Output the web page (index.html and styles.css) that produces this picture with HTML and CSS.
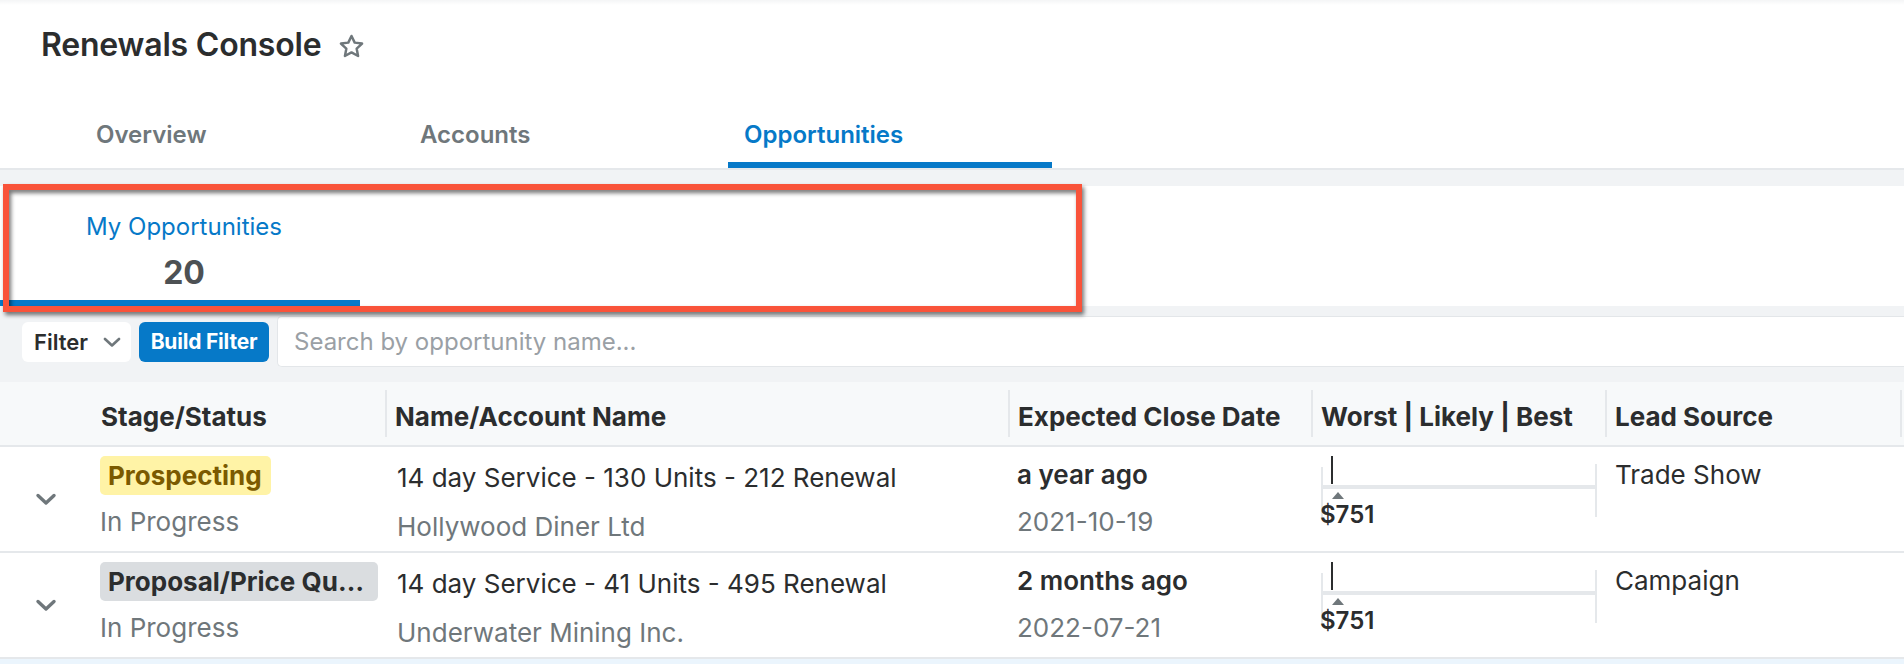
FILE: index.html
```html
<!DOCTYPE html>
<html lang="en">
<head>
<meta charset="utf-8">
<title>Renewals Console</title>
<link rel="stylesheet" href="styles.css">
</head>
<body>
<div class="page">
  <header class="app-header">
    <div class="title-row">
      <h1 class="title">Renewals Console</h1>
      <svg class="star" viewBox="0 0 24 24" width="27" height="27" aria-hidden="true">
        <path d="M12 2.6l2.85 5.95 6.55.85-4.8 4.55 1.25 6.5L12 17.3l-5.85 3.15 1.25-6.5-4.8-4.55 6.55-.85z" fill="none" stroke="#6f777b" stroke-width="2.2" stroke-linejoin="round"/>
      </svg>
    </div>
    <nav class="tabs">
      <div class="tab">Overview</div>
      <div class="tab">Accounts</div>
      <div class="tab active">Opportunities</div>
    </nav>
  </header>

  <div class="band"></div>

  <div class="dashlet-tabs">
    <div class="dtab active">
      <div class="dtab-label">My Opportunities</div>
      <div class="dtab-count">20</div>
    </div>
  </div>

  <div class="filterbar">
    <button class="btn-filter">Filter
      <svg viewBox="0 0 18 10" width="18" height="10" aria-hidden="true"><polyline points="2,2 9,8.5 16,2" fill="none" stroke="#6f777b" stroke-width="2.6" stroke-linecap="round" stroke-linejoin="round"/></svg>
    </button>
    <button class="btn-build">Build Filter</button>
    <input class="search" type="text" placeholder="Search by opportunity name...">
  </div>

  <div class="table">
    <div class="thead">
      <div class="th th-chev"></div>
      <div class="th th-first">Stage/Status</div>
      <div class="th">Name/Account Name</div>
      <div class="th">Expected Close Date</div>
      <div class="th">Worst | Likely | Best</div>
      <div class="th">Lead Source</div>
      <div class="th"></div>
    </div>

    <div class="row">
      <div class="td td-chev">
        <svg viewBox="0 0 22 15" width="22" height="15" aria-hidden="true"><polyline points="3,3.5 11,11 19,3.5" fill="none" stroke="#6f777b" stroke-width="3.4" stroke-linecap="round" stroke-linejoin="round"/></svg>
      </div>
      <div class="td td-stage">
        <span class="badge badge-yellow">Prospecting</span>
        <div class="status">In Progress</div>
      </div>
      <div class="td td-name">
        <div class="line">14 day Service - 130 Units - 212 Renewal</div>
        <div class="line muted">Hollywood Diner Ltd</div>
      </div>
      <div class="td td-date">
        <div class="line strong">a year ago</div>
        <div class="line muted">2021-10-19</div>
      </div>
      <div class="td td-chart">
        <div class="chart">
          <span class="c-left"></span>
          <span class="c-right"></span>
          <span class="c-bar"></span>
          <span class="c-tick"></span>
          <span class="c-tri"></span>
          <span class="c-label">$751</span>
        </div>
      </div>
      <div class="td td-lead"><div class="line">Trade Show</div></div>
      <div class="td"></div>
    </div>

    <div class="row">
      <div class="td td-chev">
        <svg viewBox="0 0 22 15" width="22" height="15" aria-hidden="true"><polyline points="3,3.5 11,11 19,3.5" fill="none" stroke="#6f777b" stroke-width="3.4" stroke-linecap="round" stroke-linejoin="round"/></svg>
      </div>
      <div class="td td-stage">
        <span class="badge badge-gray">Proposal/Price Quote</span>
        <div class="status">In Progress</div>
      </div>
      <div class="td td-name">
        <div class="line">14 day Service - 41 Units - 495 Renewal</div>
        <div class="line muted">Underwater Mining Inc.</div>
      </div>
      <div class="td td-date">
        <div class="line strong">2 months ago</div>
        <div class="line muted">2022-07-21</div>
      </div>
      <div class="td td-chart">
        <div class="chart">
          <span class="c-left"></span>
          <span class="c-right"></span>
          <span class="c-bar"></span>
          <span class="c-tick"></span>
          <span class="c-tri"></span>
          <span class="c-label">$751</span>
        </div>
      </div>
      <div class="td td-lead"><div class="line">Campaign</div></div>
      <div class="td"></div>
    </div>

    <div class="row-next"></div>
  </div>

  <div class="annotation"></div>
</div>
</body>
</html>
```

FILE: styles.css
```css
* { box-sizing: border-box; }

html, body {
  margin: 0;
  padding: 0;
  background: #ffffff;
}

body {
  font-family: Inter, "Noto Sans", "Liberation Sans", sans-serif;
  color: #2b2d2e;
  width: 1904px;
  height: 664px;
  overflow: hidden;
}

.page {
  position: relative;
  width: 1904px;
}

/* ---------- header ---------- */
.app-header {
  background: linear-gradient(#f4f5f6 0, #ffffff 5px);
}

.title-row {
  height: 90px;
  display: flex;
  align-items: center;
  padding-left: 41px;
  gap: 17px;
}

.title {
  margin: 0;
  font-size: 32px;
  font-weight: 600;
  line-height: 1;
  color: #2b2d2e;
  letter-spacing: -0.2px;
}

.star { display: block; margin-top: 2px; }

.tabs {
  display: flex;
  height: 80px;
  padding-left: 80px;
  border-bottom: 2px solid #e5e8eb;
}

.tab {
  width: 324px;
  height: 78px;
  padding: 10px 0 0 16px;
  display: flex;
  align-items: center;
  font-size: 24px;
  font-weight: 600;
  color: #6f777b;
}

.tab.active {
  color: #0679c8;
  box-shadow: inset 0 -6px 0 #0679c8;
}

/* ---------- bands ---------- */
.band {
  height: 16px;
  background: #f1f3f5;
}

.dashlet-tabs {
  height: 120px;
  background: #ffffff;
  display: flex;
}

.dtab {
  width: 360px;
  padding: 26px 0 0 8px;
  text-align: center;
}

.dtab.active { box-shadow: inset 0 -6px 0 #0679c8; }

.dtab-label {
  font-size: 24px;
  line-height: 30px;
  color: #0679c8;
}

.dtab-count {
  margin-top: 11px;
  font-size: 32px;
  line-height: 40px;
  font-weight: 700;
  color: #4d5154;
}

/* ---------- filter bar ---------- */
.filterbar {
  height: 76px;
  background: #f1f3f5;
  display: flex;
  align-items: center;
  padding: 10px 0 15px 22px;
  gap: 8px;
}

.btn-filter, .btn-build {
  height: 40px;
  border: 0;
  border-radius: 6px;
  font-family: inherit;
  font-size: 22px;
  display: flex;
  align-items: center;
  white-space: nowrap;
  cursor: pointer;
}

.btn-filter {
  width: 109px;
  background: #ffffff;
  color: #2b2d2e;
  font-weight: 600;
  padding: 0 10px 0 12px;
  justify-content: space-between;
}

.btn-build {
  width: 130px;
  background: #0679c8;
  color: #ffffff;
  font-weight: 700;
  font-size: 21px;
  letter-spacing: -0.2px;
  padding: 0 4px;
  justify-content: center;
}

.search {
  flex: 1;
  height: 51px;
  border: 1px solid #e3e6e9;
  border-right: 0;
  border-radius: 5px 0 0 5px;
  background: #ffffff;
  padding: 0 0 0 16px;
  font-family: inherit;
  font-size: 24px;
  color: #2b2d2e;
  outline: none;
}

.search::placeholder { color: #9aa0a5; }

/* ---------- table ---------- */
.thead, .row {
  display: grid;
  grid-template-columns: 90px 295px 623px 303px 294px 295px 1fr;
}

.thead {
  height: 65px;
  background: #f7f9fa;
  border-bottom: 2px solid #e5e8eb;
  align-items: start;
}

.th {
  margin-top: 8px;
  height: 47px;
  padding: 5px 0 0 8px;
  border-left: 2px solid #e5e8eb;
  display: flex;
  align-items: center;
  font-size: 26px;
  font-weight: 700;
  white-space: nowrap;
  color: #2b2d2e;
}

.th-chev { border-left: 0; }
.th-first { border-left: 0; padding-left: 11px; }

.row {
  height: 106px;
  border-bottom: 2px solid #e5e8eb;
  background: #ffffff;
}

.td {
  font-size: 26px;
  min-width: 0;
}

.td-chev {
  display: flex;
  align-items: center;
  justify-content: center;
  padding-left: 2px;
}

.td-chev svg { display: block; }

.td-stage {
  padding: 9px 4px 0 10px;
}

.badge {
  display: block;
  max-width: 100%;
  width: max-content;
  height: 39px;
  line-height: 39px;
  padding: 0 9px 0 8px;
  border-radius: 5px;
  font-weight: 700;
  white-space: nowrap;
  overflow: hidden;
  text-overflow: ellipsis;
}

.badge-yellow { background: #fff3a6; color: #7b5a00; }
.badge-gray { background: #dadde0; color: #2b2d2e; width: 278px; }

.status {
  margin-top: 3px;
  line-height: 48px;
  color: #6f777b;
}

.td-name { padding: 6px 10px 0 12px; }
.td-name .line { line-height: 49px; white-space: nowrap; }

.td-date { padding: 4px 10px 0 9px; }
.td-date .line { line-height: 47px; }

.td-lead { padding: 4px 10px 0 10px; }
.td-lead .line { line-height: 47px; }

.muted { color: #6f777b; }
.strong { font-weight: 600; }

.td-chart { padding: 9px 0 0 10px; }

.chart {
  position: relative;
  width: 276px;
  height: 76px;
}

.chart span { position: absolute; display: block; }

.c-left {
  left: 0; top: 11px;
  width: 2px; height: 50px;
  background: #e5e8eb;
}

.c-right {
  right: 0; top: 8px;
  width: 2px; height: 53px;
  background: #e5e8eb;
}

.c-bar {
  left: 0; right: 0; top: 29px;
  height: 4px;
  background: #e5e8eb;
}

.c-tick {
  left: 10px; top: 0;
  width: 2px; height: 28px;
  background: #2b2d2e;
}

.c-tri {
  left: 11px; top: 36px;
  width: 0; height: 0;
  border-left: 6px solid transparent;
  border-right: 6px solid transparent;
  border-bottom: 7px solid #6f777b;
}

.c-label {
  left: -1px; top: 45px;
  font-size: 24px;
  line-height: 28px;
  font-weight: 600;
  color: #2b2d2e;
}

.row-next {
  height: 10px;
  background: #ebf5fd;
}

/* ---------- annotation overlay ---------- */
.annotation {
  position: absolute;
  left: 3px;
  top: 184px;
  width: 1079px;
  height: 128px;
  border: 6px solid #f9533a;
  filter: drop-shadow(2px 3px 2px rgba(0, 0, 0, 0.55));
  pointer-events: none;
}
```
